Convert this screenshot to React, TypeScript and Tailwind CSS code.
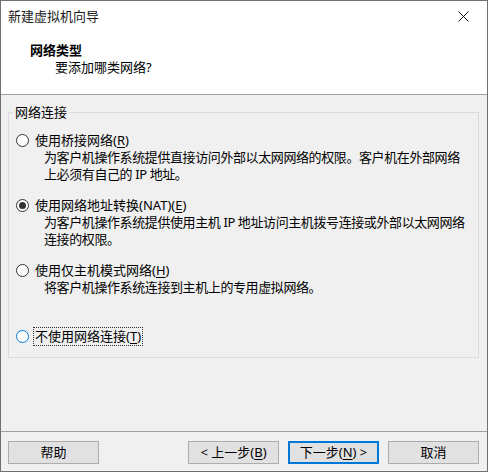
import { useState } from 'react';

const font = { fontFamily: '"Noto Sans", "Noto Sans CJK SC", sans-serif' };

type Opt = { id: string; label: string; key: string; desc: string[] };

const options: Opt[] = [
  {
    id: 'bridge',
    label: '使用桥接网络(',
    key: 'R',
    desc: ['为客户机操作系统提供直接访问外部以太网网络的权限。客户机在外部网络', '上必须有自己的 IP 地址。'],
  },
  {
    id: 'nat',
    label: '使用网络地址转换(NAT)(',
    key: 'E',
    desc: ['为客户机操作系统提供使用主机 IP 地址访问主机拨号连接或外部以太网网络', '连接的权限。'],
  },
  {
    id: 'host',
    label: '使用仅主机模式网络(',
    key: 'H',
    desc: ['将客户机操作系统连接到主机上的专用虚拟网络。'],
  },
  {
    id: 'none',
    label: '不使用网络连接(',
    key: 'T',
    desc: [],
  },
];

const Radio = ({ checked, focused }: { checked: boolean; focused: boolean }) => (
  <span
    className={`flex h-[13px] w-[13px] shrink-0 items-center justify-center rounded-full border bg-white ${
      focused ? 'border-[#0078d7]' : 'border-[#333333]'
    }`}
  >
    {checked && <span className="h-[7px] w-[7px] rounded-full bg-[#333333]" />}
  </span>
);

const Btn = ({ children, primary }: { children: React.ReactNode; primary?: boolean }) => (
  <button
    className={`flex h-[23px] w-[91px] items-center justify-center border bg-[#e1e1e1] text-[13px] text-black ${
      primary ? 'border-[#0078d7] shadow-[inset_0_0_0_1px_#0078d7]' : 'border-[#adadad]'
    }`}
  >
    {children}
  </button>
);

export default function App() {
  const [selected, setSelected] = useState('nat');
  const focused = 'none';

  return (
    <div
      className="flex h-[472px] w-[488px] flex-col border border-[#707070] bg-[#f0f0f0] text-[13px] leading-[17px] text-black"
      style={font}
    >
      {/* Header */}
      <div className="h-[93px] shrink-0 bg-white">
        <div className="flex h-[31px] items-center justify-between pl-[7px] pr-[12px]">
          <span className="text-[#1a1a1a]">新建虚拟机向导</span>
          <svg width="11" height="11" viewBox="0 0 11 11" className="mr-[6px]">
            <path d="M0.5 0.5 L10.5 10.5 M10.5 0.5 L0.5 10.5" stroke="#111" strokeWidth="1" fill="none" />
          </svg>
        </div>
        <div className="pl-[29px] pt-[10px]">
          <div className="font-bold">网络类型</div>
          <div className="pl-[25px]">要添加哪类网络?</div>
        </div>
      </div>
      <div className="h-px shrink-0 bg-[#a0a0a0]" />

      {/* Body */}
      <div className="flex-1">
        <fieldset className="ml-[7px] mt-[9px] w-[471px] border border-[#dcdcdc] px-0 pb-[12px]">
          <legend className="ml-[4px] px-[2px]">网络连接</legend>
          <div className="pt-[11px]">
            {options.map((o, i) => (
              <div key={o.id} className={`${i === 3 ? 'mt-[1px]' : ''} ${i < 3 ? 'h-[65px]' : ''}`}>
                <label className="flex items-center pl-[7px]" onClick={() => setSelected(o.id)}>
                  <Radio checked={selected === o.id} focused={focused === o.id} />
                  <span
                    className={`ml-[5px] pl-[1px] pr-[1px] ${
                      focused === o.id ? 'outline-1 outline-dotted outline-[#333]' : ''
                    }`}
                  >
                    {o.label}
                    <u className="underline-offset-2">{o.key}</u>)
                  </span>
                </label>
                {o.desc.map((d) => (
                  <div key={d} className="whitespace-nowrap pl-[35px] tracking-[-0.4px]">
                    {d}
                  </div>
                ))}
              </div>
            ))}
          </div>
        </fieldset>
      </div>

      <div className="h-px shrink-0 bg-[#a0a0a0]" />
      {/* Footer */}
      <div className="flex h-[39px] shrink-0 items-start justify-between pl-[7px] pr-[8px] pt-[9px]">
        <Btn>帮助</Btn>
        <div className="flex gap-[9px]">
          <Btn>
            &lt; 上一步(<u className="underline-offset-2">B</u>)
          </Btn>
          <Btn primary>
            下一步(<u className="underline-offset-2">N</u>) &gt;
          </Btn>
          <Btn>取消</Btn>
        </div>
      </div>
    </div>
  );
}
